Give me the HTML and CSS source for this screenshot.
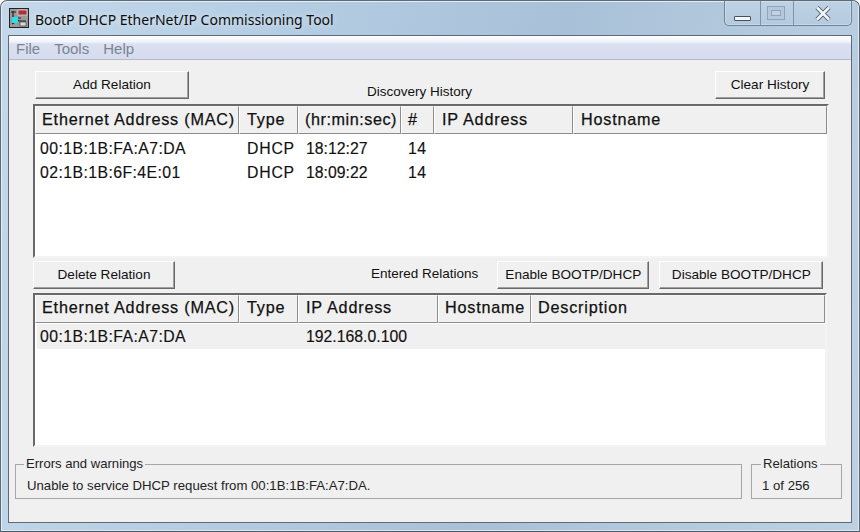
FILE: index.html
```html
<!DOCTYPE html>
<html lang="en">
<head>
<meta charset="utf-8">
<title>BootP DHCP EtherNet/IP Commissioning Tool</title>
<link rel="stylesheet" href="styles.css">
</head>
<body>
<div class="window">
  <header class="titlebar">
    <svg class="app-icon" width="20" height="20" viewBox="0 0 20 20">
      <rect x="0.5" y="0.5" width="19" height="19" fill="#9a9a9a" stroke="#222"/>
      <rect x="9" y="2" width="9" height="5" fill="#b03038" stroke="#eee" stroke-width="0.6"/>
      <path d="M2 4h5M4 3v6l6 4h7M3 16l5-3M6 10h6" stroke="#222" stroke-width="1.2" fill="none"/>
      <rect x="3" y="9" width="6" height="6" fill="#27e0e8"/>
      <rect x="11" y="14" width="6" height="4" fill="#d8d8d8" stroke="#333" stroke-width="0.6"/>
    </svg>
    <span class="title">BootP DHCP EtherNet/IP Commissioning Tool</span>
    <div class="controls">
      <div class="ctl ctl-min"><span class="min-glyph"></span></div>
      <div class="ctl ctl-max"><span class="max-glyph"></span></div>
      <div class="ctl ctl-close">
        <svg width="16" height="15" viewBox="0 0 16 15">
          <path d="M2 1.5L14 13.5M14 1.5L2 13.5" stroke="#4a5a68" stroke-width="4.4"/>
          <path d="M2 1.5L14 13.5M14 1.5L2 13.5" stroke="#f4f6f8" stroke-width="2.6"/>
        </svg>
      </div>
    </div>
  </header>
  <div class="client">
    <nav class="menubar">
      <span>File</span><span>Tools</span><span>Help</span>
    </nav>
    <main class="content">
      <div class="row row-top">
        <button class="btn btn-add">Add Relation</button>
        <span class="caption caption-history">Discovery History</span>
        <button class="btn btn-clear">Clear History</button>
      </div>
      <section class="list list-history">
        <div class="list-head cols-history">
          <div>Ethernet Address (MAC)</div><div class="nudge">Type</div><div class="tight">(hr:min:sec)</div><div>#</div><div class="nudge">IP Address</div><div class="nudge">Hostname</div>
        </div>
        <div class="list-row cols-history">
          <div class="mac">00:1B:1B:FA:A7:DA</div><div class="caps">DHCP</div><div class="num">18:12:27</div><div class="nudge">14</div><div></div><div></div>
        </div>
        <div class="list-row cols-history">
          <div class="mac">02:1B:1B:6F:4E:01</div><div class="caps">DHCP</div><div class="num">18:09:22</div><div class="nudge">14</div><div></div><div></div>
        </div>
      </section>
      <div class="row row-mid">
        <button class="btn btn-delete">Delete Relation</button>
        <span class="caption caption-entered">Entered Relations</span>
        <button class="btn btn-enable">Enable BOOTP/DHCP</button>
        <button class="btn btn-disable">Disable BOOTP/DHCP</button>
      </div>
      <section class="list list-entered">
        <div class="list-head cols-entered">
          <div>Ethernet Address (MAC)</div><div class="nudge">Type</div><div class="nudge">IP Address</div><div>Hostname</div><div>Description</div>
        </div>
        <div class="list-row selected cols-entered">
          <div class="mac">00:1B:1B:FA:A7:DA</div><div></div><div class="num">192.168.0.100</div><div></div><div></div>
        </div>
      </section>
      <div class="status">
        <fieldset class="group group-errors">
          <legend>Errors and warnings</legend>
          <div>Unable to service DHCP request from 00:1B:1B:FA:A7:DA.</div>
        </fieldset>
        <fieldset class="group group-relations">
          <legend>Relations</legend>
          <div>1 of 256</div>
        </fieldset>
      </div>
    </main>
  </div>
</div>
</body>
</html>
```
FILE: styles.css
```css
* { box-sizing: border-box; }
html, body { margin: 0; padding: 0; }
body { width: 860px; height: 532px; overflow: hidden; background: #fff; }

.window {
  width: 860px;
  height: 532px;
  display: flex;
  flex-direction: column;
  padding: 0 7px 8px 7px;
  border: 1px solid #5d6b78;
  border-bottom-color: #4c5a68;
  border-radius: 7px 7px 0 0;
  background: linear-gradient(100deg, #c4d8ea 0%, #b4cde3 30%, #a9c1d8 60%, #bdd1e3 100%);
  box-shadow: inset 1px 1px 0 #e4eef6, inset -1px -1px 0 #dbe6f0;
}

.titlebar {
  height: 34px;
  display: flex;
  align-items: flex-start;
  flex: none;
}
.app-icon { margin: 7px 0 0 1px; flex: none; }
.title {
  margin: 9px 0 0 6px;
  font: 14px/20px "Noto Sans", "Open Sans", sans-serif;
  color: #0c0c0c;
  text-shadow: 0 0 6px rgba(255,255,255,.7);
}
.controls {
  margin-left: auto;
  width: 128px;
  height: 25px;
  display: flex;
  border: 1px solid #6f8497;
  border-top: 0;
  border-radius: 0 0 5px 5px;
  background: linear-gradient(#bfd2e4, #b5cadf);
  box-shadow: inset 0 0 0 1px rgba(255,255,255,.25);
}
.ctl { display: flex; align-items: center; justify-content: center; }
.ctl-min { width: 36px; border-right: 1px solid #7e94a8; }
.ctl-max { width: 33px; border-right: 1px solid #7e94a8; }
.ctl-close { flex: 1; padding-top: 1px; }
.min-glyph {
  width: 17px; height: 5px; margin-top: 10px;
  background: #f4f6f8; border: 1px solid #45525f; border-radius: 1px;
}
.max-glyph {
  width: 18px; height: 14px; margin: -1px 3px 0 0;
  border: 1px solid #8fa4b7; background: #c0d2e3;
  box-shadow: inset 0 0 0 3px #b5c9dc, inset 0 0 0 4px #8fa4b7;
}

.client {
  flex: 1;
  display: flex;
  flex-direction: column;
  border: 1px solid #5f6a75;
  min-height: 0;
  background: #f0f0f0;
}
.menubar {
  height: 24px;
  flex: none;
  display: flex;
  gap: 14px;
  padding: 3px 0 0 7px;
  font: 15px/20px "Liberation Sans", sans-serif;
  color: #7b8492;
  background: linear-gradient(#fefeff 0%, #f1f4fb 25%, #d9e0f0 35%, #d6dcee 100%);
  border-bottom: 1px solid #b4bccb;
}
.content {
  flex: 1;
  padding: 11px 0 0 24px;
  color: #111;
  min-height: 0;
}

.row { display: flex; align-items: flex-start; }
.row-top { height: 33px; padding-left: 2px; }
.row-mid { height: 32px; margin-top: 3px; }

.btn {
  height: 28px;
  padding: 0 0 1px;
  font: 13.6px/16px "Liberation Sans", sans-serif;
  color: #111;
  background: #f0f0f0;
  border: 1px solid;
  border-color: #fff #696969 #696969 #fff;
  box-shadow: inset -1px -1px 0 #a0a0a0;
  border-radius: 0;
}
.btn-add { width: 154px; }
.btn-clear { width: 110px; margin-left: auto; margin-right: 26px; }
.btn-delete { width: 142px; }
.btn-enable { width: 152px; }
.btn-disable { width: 164px; margin-left: 10px; }

.caption { font: 13.5px/16px "Liberation Sans", sans-serif; }
.caption-history { margin: 13px 0 0 178px; }
.caption-entered { margin: 5px 19px 0 196px; }

.list {
  width: 796px;
  height: 154px;
  background: #fff;
  border: 2px solid;
  border-color: #696969 #f4f4f4 #f4f4f4 #696969;
  overflow: hidden;
}
.list-entered { width: 794px; }
.list-head {
  display: grid;
  height: 28px;
  font: 16.2px/25px "Liberation Sans", sans-serif;
  letter-spacing: .8px;
  color: #111;
  -webkit-text-stroke: .25px #111;
}
.list-entered .list-head { line-height: 23px; }
.list-head > div {
  padding-left: 6px;
  background: #f0f0f0;
  white-space: nowrap;
  overflow: hidden;
  border: 1px solid;
  border-color: #fff #8d8d8d #8d8d8d #fff;
  border-top-color: #f8f8f8;
}
.list-head > .tight { letter-spacing: .55px; }
.list-head > .nudge { padding-left: 7px; }
.cols-history { grid-template-columns: 204px 59px 103px 33px 139px 254px; }
.cols-entered { grid-template-columns: 204px 59px 140px 93px 294px; }

.list-row {
  display: grid;
  height: 24px;
  font: 15.8px/24px "Liberation Sans", sans-serif;
  letter-spacing: .55px;
  color: #111;
}
.list-row > div { padding-left: 6px; white-space: nowrap; -webkit-text-stroke: .15px #111; }
.list-row > .mac { padding-left: 5px; letter-spacing: .43px; }
.list-row > .caps { padding-left: 8px; letter-spacing: .8px; }
.list-row > .num { padding-left: 8px; letter-spacing: 0; }
.list-row > .nudge { padding-left: 7px; }
.list-history .list-head + .list-row { margin-top: 3px; }
.list-row.selected {
  height: 25px;
  margin: 1px 0 0 2px;
  line-height: 25px;
  background: #f0f0f0;
  grid-template-columns: 202px 59px 140px 93px 294px;
}
.list-row.selected > .mac { padding-left: 3px; }

.status {
  display: flex;
  gap: 9px;
  margin: 9px 0 0 -18px;
}
.group {
  height: 43px;
  margin: 0;
  padding: 0 0 0 10px;
  border: 1px solid #a6a6a6;
  font: 13.2px/16px "Liberation Sans", sans-serif;
  color: #222;
}
.group legend { padding: 0 2px; margin-left: -1px; font-size: 13.1px; line-height: 16px; }
.group > div { margin-top: 6px; white-space: nowrap; }
.group-errors { width: 727px; }
.group-errors legend { margin-left: -2px; }
.group-errors > div { padding-left: 1px; }
.group-relations { width: 91px; }
```
